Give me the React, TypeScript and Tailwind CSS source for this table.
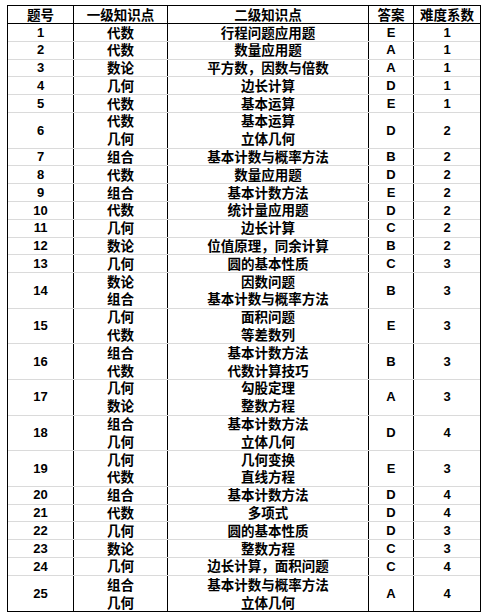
import React from "react";

type Row = { n: string; a: string[]; b: string[]; ans: string; d: string };

const rows: Row[] = [
  { n: "1", a: ["代数"], b: ["行程问题应用题"], ans: "E", d: "1" },
  { n: "2", a: ["代数"], b: ["数量应用题"], ans: "A", d: "1" },
  { n: "3", a: ["数论"], b: ["平方数，因数与倍数"], ans: "A", d: "1" },
  { n: "4", a: ["几何"], b: ["边长计算"], ans: "D", d: "1" },
  { n: "5", a: ["代数"], b: ["基本运算"], ans: "E", d: "1" },
  { n: "6", a: ["代数", "几何"], b: ["基本运算", "立体几何"], ans: "D", d: "2" },
  { n: "7", a: ["组合"], b: ["基本计数与概率方法"], ans: "B", d: "2" },
  { n: "8", a: ["代数"], b: ["数量应用题"], ans: "D", d: "2" },
  { n: "9", a: ["组合"], b: ["基本计数方法"], ans: "E", d: "2" },
  { n: "10", a: ["代数"], b: ["统计量应用题"], ans: "D", d: "2" },
  { n: "11", a: ["几何"], b: ["边长计算"], ans: "C", d: "2" },
  { n: "12", a: ["数论"], b: ["位值原理，同余计算"], ans: "B", d: "2" },
  { n: "13", a: ["几何"], b: ["圆的基本性质"], ans: "C", d: "3" },
  { n: "14", a: ["数论", "组合"], b: ["因数问题", "基本计数与概率方法"], ans: "B", d: "3" },
  { n: "15", a: ["几何", "代数"], b: ["面积问题", "等差数列"], ans: "E", d: "3" },
  { n: "16", a: ["组合", "代数"], b: ["基本计数方法", "代数计算技巧"], ans: "B", d: "3" },
  { n: "17", a: ["几何", "数论"], b: ["勾股定理", "整数方程"], ans: "A", d: "3" },
  { n: "18", a: ["组合", "几何"], b: ["基本计数方法", "立体几何"], ans: "D", d: "4" },
  { n: "19", a: ["几何", "代数"], b: ["几何变换", "直线方程"], ans: "E", d: "3" },
  { n: "20", a: ["组合"], b: ["基本计数方法"], ans: "D", d: "4" },
  { n: "21", a: ["代数"], b: ["多项式"], ans: "D", d: "4" },
  { n: "22", a: ["几何"], b: ["圆的基本性质"], ans: "D", d: "3" },
  { n: "23", a: ["数论"], b: ["整数方程"], ans: "C", d: "3" },
  { n: "24", a: ["几何"], b: ["边长计算，面积问题"], ans: "C", d: "4" },
  { n: "25", a: ["组合", "几何"], b: ["基本计数与概率方法", "立体几何"], ans: "A", d: "4" },
];

const cjk = "font-['Noto_Sans_CJK_SC',sans-serif] font-bold text-[13.5px] leading-[17.8px] text-black";
const lat = "font-['Liberation_Sans','Noto_Sans_CJK_SC',sans-serif] font-bold text-[13px] text-black";

function Lines({ items }: { items: string[] }) {
  return (
    <div className="flex flex-col items-center">
      {items.map((t, i) => (
        <span key={i} className={cjk}>
          {t}
        </span>
      ))}
    </div>
  );
}

export default function App() {
  return (
    <div className="w-[486px] h-[616px] bg-white pt-[5px] pl-[7px]">
      <div className="w-[474px] border border-black">
        <div className="flex h-[18px] border-b border-black">
          <div className={`w-[66px] border-r border-black flex items-center justify-center ${cjk}`}>题号</div>
          <div className={`w-[94px] border-r border-black flex items-center justify-center ${cjk}`}>一级知识点</div>
          <div className={`w-[201px] border-r border-black flex items-center justify-center ${cjk}`}>二级知识点</div>
          <div className={`w-[45px] border-r border-black flex items-center justify-center ${cjk}`}>答案</div>
          <div className={`w-[66px] flex items-center justify-center ${cjk}`}>难度系数</div>
        </div>
        {rows.map((r, i) => {
          const dbl = r.a.length > 1;
          const last = i === rows.length - 1;
          return (
            <div
              key={r.n}
              className={`flex ${dbl ? "h-[35.6px]" : "h-[17.8px]"} ${last ? "" : "border-b border-[#dadada]"}`}
            >
              <div className={`w-[66px] border-r border-black flex items-center justify-center ${lat}`}>{r.n}</div>
              <div className="w-[94px] border-r border-black flex items-center justify-center">
                <Lines items={r.a} />
              </div>
              <div className="w-[201px] border-r border-black flex items-center justify-center">
                <Lines items={r.b} />
              </div>
              <div className={`w-[45px] border-r border-black flex items-center justify-center ${lat}`}>{r.ans}</div>
              <div className={`w-[66px] flex items-center justify-center ${lat}`}>{r.d}</div>
            </div>
          );
        })}
      </div>
    </div>
  );
}
